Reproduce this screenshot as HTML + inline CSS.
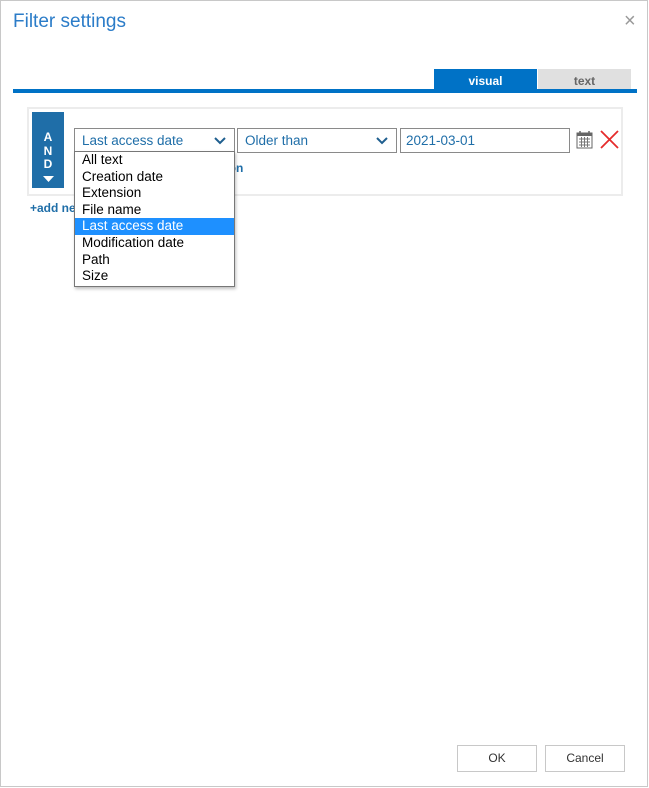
<!DOCTYPE html>
<html><head><meta charset="utf-8"><style>
*{box-sizing:border-box;margin:0;padding:0}
body{width:649px;height:788px;background:#fff;font-family:"Liberation Sans",sans-serif;position:relative;overflow:hidden}
.dlg{position:absolute;left:0;top:0;width:648px;height:787px;border:1px solid #c8c8c8}
.a{position:absolute}
.title{left:13px;top:11px;font-size:19px;color:#2b7cc8}
.close{left:624px;top:10px;font-size:20px;color:#999}
.sel{border:1px solid #8a8a8a;height:25px;font-size:13.5px;color:#1f6ea8;padding:4px 7px;background:#fff}
.chev{position:absolute;right:8px;top:4px}
.item{height:16.6px;line-height:16.6px;padding-left:7px;font-size:13.5px;color:#000}
.btn{border:1px solid #c8c8c8;height:27px;font-size:12px;color:#333;text-align:center;line-height:25px;background:#fff}
</style></head><body>
<div class="dlg"></div>
<div class="a title">Filter settings</div>
<div class="a close">×</div>
<div class="a" style="left:434px;top:69px;width:103px;height:21px;background:#0072c6;color:#fff;font-weight:bold;font-size:12px;text-align:center;line-height:24px">visual</div>
<div class="a" style="left:538px;top:69px;width:93px;height:20px;background:#e0e0e0;color:#666;font-weight:bold;font-size:12px;text-align:center;line-height:25px">text</div>
<div class="a" style="left:13px;top:89px;width:624px;height:4px;background:#0072c6"></div>
<div class="a" style="left:27px;top:107px;width:596px;height:89px;border:2px solid #ececec"></div>
<div class="a" style="left:32px;top:112px;width:32px;height:76px;background:#1f6ea8;color:#fff;font-weight:bold;font-size:12px;text-align:center;line-height:13.5px;padding-top:19px">A<br>N<br>D<br><svg width="11" height="7" viewBox="0 0 11 7"><path d="M0 1h11L5.5 7z" fill="#fff"/></svg></div>
<div class="a" style="left:131px;top:161px;font-size:12px;font-weight:bold;color:#1f6ea8">+add new condition</div>
<div class="a sel" style="left:74px;top:128px;width:161px">Last access date<svg class="chev" width="12" height="14" viewBox="0 0 12 14"><path d="M1 5l5 5 5-5" stroke="#1f5f8f" stroke-width="2" fill="none"/></svg></div>
<div class="a sel" style="left:237px;top:128px;width:160px">Older than<svg class="chev" width="12" height="14" viewBox="0 0 12 14"><path d="M1 5l5 5 5-5" stroke="#1f5f8f" stroke-width="2" fill="none"/></svg></div>
<div class="a sel" style="left:400px;top:128px;width:170px;padding-left:5px">2021-03-01</div>
<svg class="a" style="left:576px;top:130px" width="17" height="19" viewBox="0 0 17 19"><rect x="1" y="3" width="15" height="15" fill="#fff" stroke="#666"/><rect x="1" y="3" width="15" height="3" fill="#666"/><path d="M4 1v4M13 1v4" stroke="#666" stroke-width="1.5"/><path d="M3 9h11M3 12h11M3 15h11M5.5 7v10M8.5 7v10M11.5 7v10" stroke="#777" stroke-width="1"/></svg>
<svg class="a" style="left:600px;top:130px" width="19" height="19" viewBox="0 0 19 19"><path d="M1 1l17 17M18 1L1 18" stroke="#e52b2b" stroke-width="1.8"/></svg>
<div class="a" style="left:30px;top:201px;font-size:12px;font-weight:bold;color:#1f6ea8">+add new condition</div>
<div class="a" style="left:74px;top:151px;width:161px;height:136px;border:1px solid #777;background:#fff;box-shadow:1px 2px 3px rgba(0,0,0,.25);padding-top:0">
<div class="item">All text</div><div class="item">Creation date</div><div class="item">Extension</div><div class="item">File name</div>
<div class="item" style="background:#1e90ff;color:#fff">Last access date</div>
<div class="item">Modification date</div><div class="item">Path</div><div class="item">Size</div>
</div>
<div class="a btn" style="left:457px;top:745px;width:80px">OK</div>
<div class="a btn" style="left:545px;top:745px;width:80px">Cancel</div>
</body></html>
